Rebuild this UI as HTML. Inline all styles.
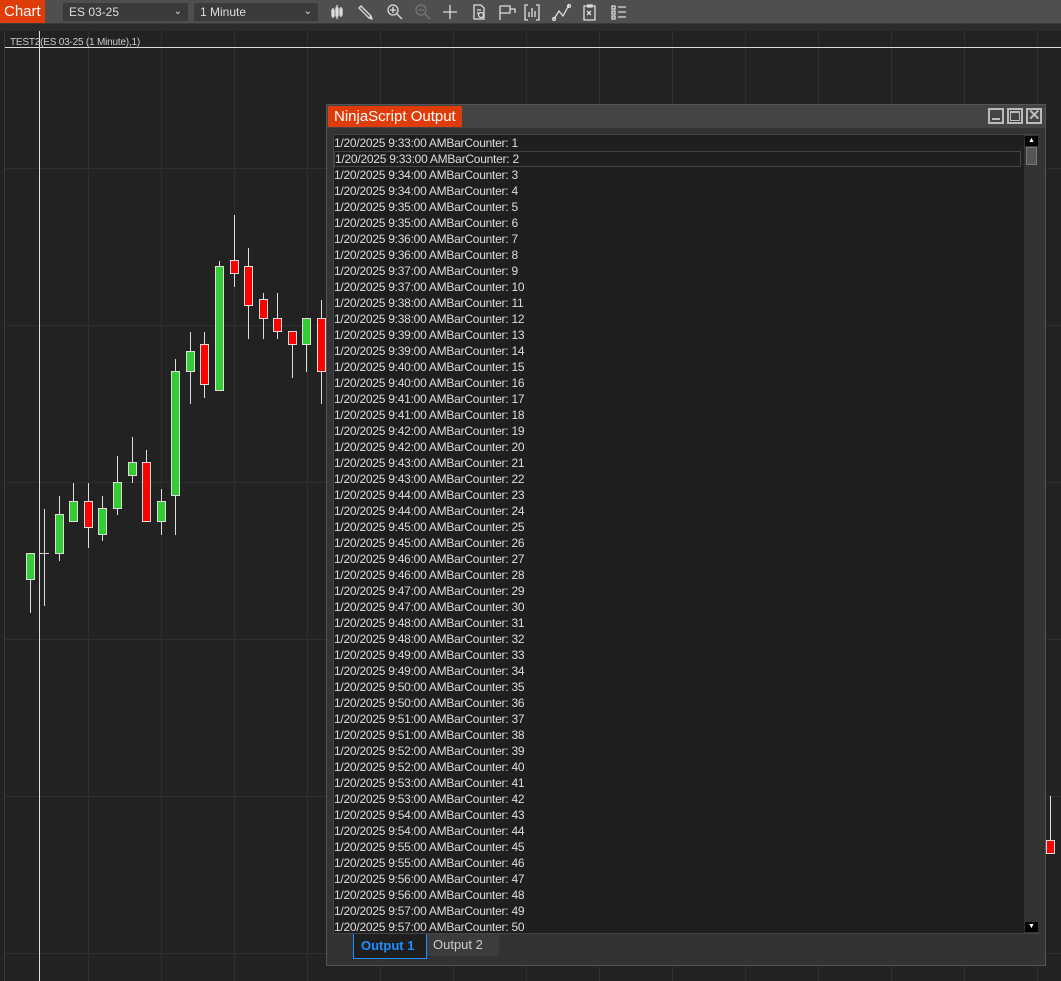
<!DOCTYPE html>
<html><head><meta charset="utf-8"><style>
*{margin:0;padding:0;box-sizing:border-box}
body{width:1061px;height:981px;background:#222;overflow:hidden;font-family:"Liberation Sans",sans-serif;position:relative}
.tb{position:absolute;left:0;top:0;width:1061px;height:24px;background:#4f4f4f;border-bottom:1px solid #3a3a3a}
.chartbtn{position:absolute;left:0;top:0;width:45px;height:23px;background:#e03c0a;color:#fff;font-size:15px;line-height:23px;padding-left:4px}
.dd{position:absolute;top:3px;height:18px;background:#3a3a3a;color:#ddd;font-size:12px;line-height:18px;padding-left:6px}
.dd span{position:absolute;right:6px;top:0;font-size:10px}
.strip{position:absolute;left:0;top:24px;width:1061px;height:7px;background:#2b2b2b}
.lbl{position:absolute;left:10px;top:37px;font-size:10px;color:#ccc;letter-spacing:-0.2px}
.win{position:absolute;left:326px;top:104px;width:720px;height:862px;background:#333;border:1px solid #555}
.ttl{position:absolute;left:1px;top:1px;width:134px;height:21px;background:#e03c0a;color:#fff;font-size:15px;line-height:21px;padding-left:6px}
.tbar{position:absolute;left:0;top:0;width:718px;height:23px;background:#444}
.wb{position:absolute;top:3px;width:16px;height:16px;border:2px solid #bbb}
.cont{position:absolute;left:6px;top:29px;width:706px;height:800px;background:#1f1f1f;border:1px solid #444}
.rows{position:absolute;left:0;top:0;font-size:12px;color:#ddd;line-height:16px;letter-spacing:-0.25px}
.rows div{height:16px;width:687px;white-space:nowrap}
.rows div.s{border:1px solid #444;line-height:14px}
.sb{position:absolute;left:690px;top:0;width:15px;height:798px;background:#333}
.arr{position:absolute;left:1px;width:13px;height:10px;background:#000;color:#fff;font-size:7px;text-align:center;line-height:10px}
.thumb{position:absolute;left:2px;top:12px;width:11px;height:18px;background:#555;border:1px solid #777}
.tab1{position:absolute;left:26px;top:829px;width:74px;height:25px;border:1px solid #1e90ff;border-top:none;background:#1f1f1f;color:#1e90ff;font-weight:bold;font-size:13px;line-height:23px;padding-left:7px}
.tab2{position:absolute;left:100px;top:829px;width:72px;height:22px;background:#3c3c3c;color:#ccc;font-size:13px;line-height:21px;padding-left:6px}
</style></head><body>
<svg style="position:absolute;left:0;top:0" width="1061" height="981">
<rect x="4" y="30" width="1057" height="951" fill="#222"/>
<line x1="4" y1="30" x2="1061" y2="30" stroke="#3a3a3a"/>
<line x1="4.5" y1="30" x2="4.5" y2="981" stroke="#3a3a3a"/>
<g stroke="#2f2f2f" stroke-width="1">
<line x1="88.5" y1="31" x2="88.5" y2="981"/><line x1="161.5" y1="31" x2="161.5" y2="981"/><line x1="234.5" y1="31" x2="234.5" y2="981"/><line x1="307.5" y1="31" x2="307.5" y2="981"/><line x1="380.5" y1="31" x2="380.5" y2="981"/><line x1="453.5" y1="31" x2="453.5" y2="981"/><line x1="526.5" y1="31" x2="526.5" y2="981"/><line x1="599.5" y1="31" x2="599.5" y2="981"/><line x1="672.5" y1="31" x2="672.5" y2="981"/><line x1="745.5" y1="31" x2="745.5" y2="981"/><line x1="818.5" y1="31" x2="818.5" y2="981"/><line x1="891.5" y1="31" x2="891.5" y2="981"/><line x1="964.5" y1="31" x2="964.5" y2="981"/><line x1="1037.5" y1="31" x2="1037.5" y2="981"/>
<line x1="5" y1="168.5" x2="1061" y2="168.5"/><line x1="5" y1="325.5" x2="1061" y2="325.5"/><line x1="5" y1="482.5" x2="1061" y2="482.5"/><line x1="5" y1="639.5" x2="1061" y2="639.5"/><line x1="5" y1="796.5" x2="1061" y2="796.5"/><line x1="5" y1="953.5" x2="1061" y2="953.5"/>
</g>
<line x1="5" y1="47.5" x2="1061" y2="47.5" stroke="#ddd"/>
<line x1="39.5" y1="31" x2="39.5" y2="981" stroke="#ddd"/>
<g stroke="#ddd" stroke-width="1">
<line x1="30.5" y1="553" x2="30.5" y2="613"/><rect x="26.5" y="553.5" width="8" height="26" fill="#33cc33"/>
<line x1="44.5" y1="509" x2="44.5" y2="606"/><line x1="40" y1="553.5" x2="49" y2="553.5"/>
<line x1="59.5" y1="496" x2="59.5" y2="561"/><rect x="55.5" y="514.5" width="8" height="39" fill="#33cc33"/>
<line x1="73.5" y1="483" x2="73.5" y2="521"/><rect x="69.5" y="501.5" width="8" height="20" fill="#33cc33"/>
<line x1="88.5" y1="483" x2="88.5" y2="548"/><rect x="84.5" y="501.5" width="8" height="26" fill="#ff0000"/>
<line x1="102.5" y1="496" x2="102.5" y2="541"/><rect x="98.5" y="508.5" width="8" height="26" fill="#33cc33"/>
<line x1="117.5" y1="456" x2="117.5" y2="515"/><rect x="113.5" y="482.5" width="8" height="26" fill="#33cc33"/>
<line x1="132.5" y1="437" x2="132.5" y2="483"/><rect x="128.5" y="462.5" width="8" height="13" fill="#33cc33"/>
<line x1="146.5" y1="450" x2="146.5" y2="521"/><rect x="142.5" y="462.5" width="8" height="59" fill="#ff0000"/>
<line x1="161.5" y1="489" x2="161.5" y2="535"/><rect x="157.5" y="501.5" width="8" height="20" fill="#33cc33"/>
<line x1="175.5" y1="359" x2="175.5" y2="535"/><rect x="171.5" y="371.5" width="8" height="124" fill="#33cc33"/>
<line x1="190.5" y1="332" x2="190.5" y2="404"/><rect x="186.5" y="351.5" width="8" height="20" fill="#33cc33"/>
<line x1="204.5" y1="332" x2="204.5" y2="398"/><rect x="200.5" y="344.5" width="8" height="40" fill="#ff0000"/>
<line x1="219.5" y1="261" x2="219.5" y2="390"/><rect x="215.5" y="266.5" width="8" height="124" fill="#33cc33"/>
<line x1="234.5" y1="215" x2="234.5" y2="287"/><rect x="230.5" y="260.5" width="8" height="13" fill="#ff0000"/>
<line x1="248.5" y1="248" x2="248.5" y2="339"/><rect x="244.5" y="266.5" width="8" height="39" fill="#ff0000"/>
<line x1="263.5" y1="293" x2="263.5" y2="339"/><rect x="259.5" y="299.5" width="8" height="19" fill="#ff0000"/>
<line x1="277.5" y1="293" x2="277.5" y2="339"/><rect x="273.5" y="318.5" width="8" height="13" fill="#ff0000"/>
<line x1="292.5" y1="331" x2="292.5" y2="378"/><rect x="288.5" y="331.5" width="8" height="13" fill="#ff0000"/>
<line x1="306.5" y1="318" x2="306.5" y2="372"/><rect x="302.5" y="318.5" width="8" height="26" fill="#33cc33"/>
<line x1="321.5" y1="300" x2="321.5" y2="404"/><rect x="317.5" y="318.5" width="8" height="53" fill="#ff0000"/>
<line x1="1050.5" y1="796" x2="1050.5" y2="840"/><rect x="1046.5" y="840.5" width="8" height="13" fill="#ff0000"/>
</g>
</svg>
<div class="tb">
<div class="chartbtn">Chart</div>
<div class="dd" style="left:63px;width:125px">ES 03-25<span>&#8964;</span></div>
<div class="dd" style="left:194px;width:124px">1 Minute<span>&#8964;</span></div>
<svg style="position:absolute;left:328px;top:2px" width="310" height="20" stroke="#ddd" fill="none" stroke-width="1.3">
<path d="M5 6v10M9 3v14M13 5v10M4 8h2v6h-2zM8 6h2v8h-2zM12 7h2v6h-2z"/>
<path d="M33 4l10 10-2 2-10-10zM43 14l1 3-3-1"/>
<circle cx="65" cy="8" r="5"/><path d="M69 12l5 5M62 8h6M65 5v6"/>
<g stroke="#777"><circle cx="93" cy="8" r="5"/><path d="M97 12l5 5M90 8h6"/></g>
<path d="M122 3v14M115 10h14"/>
<path d="M146 3h7l3 3v11h-10zM149 8h4M149 11h2"/><circle cx="153" cy="13" r="2.5"/>
<path d="M172 4v14M172 4h10v7h-10M182 7h5v4"/>
<path d="M200 3h-3v15h3M208 3h3v15h-3M201 15v-5M204 15v-9M207 15v-6"/>
<path d="M226 17l5-8 4 5 6-11"/><circle cx="226" cy="17" r="1.5"/><circle cx="241" cy="4" r="1.5"/>
<path d="M256 4h11v14h-11zM259 3h5v2h-5M259 9l4 4M263 9l-4 4"/>
<path d="M284 4h3v3h-3zM284 9h3v3h-3zM284 14h3v3h-3zM290 5h8M290 10h8M290 15h8"/>
</svg>
</div>
<div class="strip"></div>
<div class="lbl">TEST2(ES 03-25 (1 Minute),1)</div>
<div class="win">
<div class="tbar"></div>
<div class="ttl">NinjaScript Output</div>
<div class="wb" style="left:661px"><div style="position:absolute;left:2px;top:8px;width:8px;height:2px;background:#bbb"></div></div>
<div class="wb" style="left:680px"><div style="position:absolute;left:1px;top:1px;width:10px;height:10px;border:1px solid #bbb;border-top-width:2px"></div></div>
<div class="wb" style="left:699px;color:#bbb;font-size:15px;line-height:12px;text-align:center;font-weight:bold">✕</div>
<div class="cont">
<div class="rows">
<div>1/20/2025 9:33:00 AMBarCounter: 1</div>
<div class="s">1/20/2025 9:33:00 AMBarCounter: 2</div>
<div>1/20/2025 9:34:00 AMBarCounter: 3</div>
<div>1/20/2025 9:34:00 AMBarCounter: 4</div>
<div>1/20/2025 9:35:00 AMBarCounter: 5</div>
<div>1/20/2025 9:35:00 AMBarCounter: 6</div>
<div>1/20/2025 9:36:00 AMBarCounter: 7</div>
<div>1/20/2025 9:36:00 AMBarCounter: 8</div>
<div>1/20/2025 9:37:00 AMBarCounter: 9</div>
<div>1/20/2025 9:37:00 AMBarCounter: 10</div>
<div>1/20/2025 9:38:00 AMBarCounter: 11</div>
<div>1/20/2025 9:38:00 AMBarCounter: 12</div>
<div>1/20/2025 9:39:00 AMBarCounter: 13</div>
<div>1/20/2025 9:39:00 AMBarCounter: 14</div>
<div>1/20/2025 9:40:00 AMBarCounter: 15</div>
<div>1/20/2025 9:40:00 AMBarCounter: 16</div>
<div>1/20/2025 9:41:00 AMBarCounter: 17</div>
<div>1/20/2025 9:41:00 AMBarCounter: 18</div>
<div>1/20/2025 9:42:00 AMBarCounter: 19</div>
<div>1/20/2025 9:42:00 AMBarCounter: 20</div>
<div>1/20/2025 9:43:00 AMBarCounter: 21</div>
<div>1/20/2025 9:43:00 AMBarCounter: 22</div>
<div>1/20/2025 9:44:00 AMBarCounter: 23</div>
<div>1/20/2025 9:44:00 AMBarCounter: 24</div>
<div>1/20/2025 9:45:00 AMBarCounter: 25</div>
<div>1/20/2025 9:45:00 AMBarCounter: 26</div>
<div>1/20/2025 9:46:00 AMBarCounter: 27</div>
<div>1/20/2025 9:46:00 AMBarCounter: 28</div>
<div>1/20/2025 9:47:00 AMBarCounter: 29</div>
<div>1/20/2025 9:47:00 AMBarCounter: 30</div>
<div>1/20/2025 9:48:00 AMBarCounter: 31</div>
<div>1/20/2025 9:48:00 AMBarCounter: 32</div>
<div>1/20/2025 9:49:00 AMBarCounter: 33</div>
<div>1/20/2025 9:49:00 AMBarCounter: 34</div>
<div>1/20/2025 9:50:00 AMBarCounter: 35</div>
<div>1/20/2025 9:50:00 AMBarCounter: 36</div>
<div>1/20/2025 9:51:00 AMBarCounter: 37</div>
<div>1/20/2025 9:51:00 AMBarCounter: 38</div>
<div>1/20/2025 9:52:00 AMBarCounter: 39</div>
<div>1/20/2025 9:52:00 AMBarCounter: 40</div>
<div>1/20/2025 9:53:00 AMBarCounter: 41</div>
<div>1/20/2025 9:53:00 AMBarCounter: 42</div>
<div>1/20/2025 9:54:00 AMBarCounter: 43</div>
<div>1/20/2025 9:54:00 AMBarCounter: 44</div>
<div>1/20/2025 9:55:00 AMBarCounter: 45</div>
<div>1/20/2025 9:55:00 AMBarCounter: 46</div>
<div>1/20/2025 9:56:00 AMBarCounter: 47</div>
<div>1/20/2025 9:56:00 AMBarCounter: 48</div>
<div>1/20/2025 9:57:00 AMBarCounter: 49</div>
<div>1/20/2025 9:57:00 AMBarCounter: 50</div>
</div>
<div class="sb"><div class="arr" style="top:1px">▲</div><div class="thumb"></div><div class="arr" style="bottom:1px">▼</div></div>
</div>
<div class="tab1">Output 1</div>
<div class="tab2">Output 2</div>
</div>
</body></html>
